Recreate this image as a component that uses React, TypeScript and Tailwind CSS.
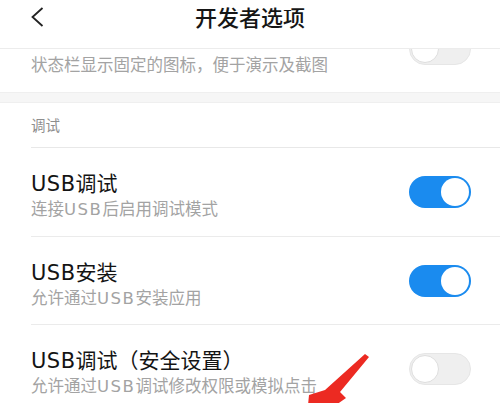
import React from "react";

interface ToggleProps {
    on: boolean;
    className?: string;
}

const Toggle = ({ on, className = "" }: ToggleProps) => {
    return (
        <div
            className={`flex h-[32px] w-[62px] shrink-0 rounded-full p-[2px] ${
                on ? "justify-end bg-[#1a8bef]" : "justify-start border border-[#e6e6e6] bg-[#efefef]"
            } ${className}`}
        >
            <div
                className={`h-[28px] w-[28px] rounded-full bg-white ${on ? "" : "-ml-px -mt-px border border-[#dedede]"}`}
            />
        </div>
    );
};

// latin runs in the reference are set in a wider face than Noto CJK's
const latin = (text: string, cls: string) =>
    text.split(/(USB)/).map((part, i) =>
        part === "USB" ? (
            <span key={i} className={`font-['DejaVu_Sans',sans-serif] ${cls}`}>
                {part}
            </span>
        ) : (
            part
        )
    );

interface RowProps {
    title: React.ReactNode;
    desc: string;
    on: boolean;
    height: string;
}

const Row = ({ title, desc, on, height }: RowProps) => {
    return (
        <div className={`ml-[31px] flex items-start justify-between border-b border-[#ebebeb] pr-[29px] ${height}`}>
            <div className="pt-[21px]">
                <div className="text-[21px] leading-[26px] text-[#141414]">{title}</div>
                <div className="text-[16.5px] leading-[22px] text-[#a3a3a3]">
                    {latin(desc, "tracking-[1.5px]")}
                </div>
            </div>
            <Toggle on={on} className="self-center" />
        </div>
    );
};

export default function App() {
    return (
        <div className="relative h-[403px] w-[500px] overflow-hidden bg-white font-['Noto_Sans_CJK_SC',sans-serif]">
            <header className="grid h-[49px] grid-cols-[1fr_auto_1fr] items-start border-b border-[#ececec] pt-[2px]">
                <div className="pl-[30px] pt-[5px]">
                    <svg width="16" height="20" viewBox="0 0 16 20" fill="none">
                        <polyline points="12.5,1 2.5,10 12.5,19" stroke="#222" strokeWidth="1.8" strokeLinejoin="miter" />
                    </svg>
                </div>
                <h1 className="text-[22px] font-medium leading-[28px] text-[#161616]">开发者选项</h1>
                <div />
            </header>

            <div className="flex h-[43px] items-start justify-between overflow-hidden pl-[31px] pr-[29px]">
                <div className="mt-[4px] text-[16.5px] leading-[22px] text-[#a3a3a3]">状态栏显示固定的图标，便于演示及截图</div>
                <Toggle on={false} className="-mt-[16px]" />
            </div>

            <div className="h-[11px] border-y border-[#efefef] bg-[#f6f6f6]" />

            <div className="ml-[31px] h-[45px] border-b border-[#e8e8e8] pt-[12px] text-[14.5px] leading-[20px] text-[#8e8e8e]">
                调试
            </div>

            <Row title={latin("USB调试", "tracking-[0.5px]")} desc="连接USB后启用调试模式" on={true} height="h-[89px]" />
            <Row title={latin("USB安装", "tracking-[0.5px]")} desc="允许通过USB安装应用" on={true} height="h-[88px]" />
            <Row
                title={
                    <>
                        {latin("USB调试（安全设置", "tracking-[0.5px]")}
                        <span className="inline-block w-[11px]">）</span>
                    </>
                }
                desc="允许通过USB调试修改权限或模拟点击"
                on={false}
                height="h-[88px]"
            />

            <svg className="pointer-events-none absolute left-0 top-0" width="500" height="403" viewBox="0 0 500 403">
                <polygon points="365,354 369,357 340,392 346,398 306,426 309,395 325,390" fill="#ec2a22" />
            </svg>
        </div>
    );
}
